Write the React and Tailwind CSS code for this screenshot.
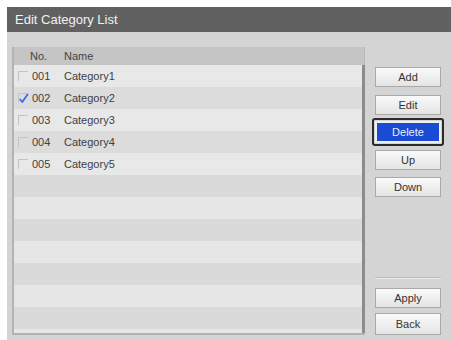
const rows = [
  { no: '001', name: 'Category1', checked: false },
  { no: '002', name: 'Category2', checked: true },
  { no: '003', name: 'Category3', checked: false },
  { no: '004', name: 'Category4', checked: false },
  { no: '005', name: 'Category5', checked: false },
]

const btn =
  'flex h-[20px] w-[66px] items-center justify-center border border-[#a9a9a9] bg-gradient-to-b from-[#fafafa] to-[#e4e4e4] text-[11px] text-[#333]'

function Btn({ children, className = '' }) {
  return <div className={`${btn} ${className}`}>{children}</div>
}

export default function App() {
  const filler = Array.from({ length: 8 })
  return (
    <div
      className="h-[340px] w-[451px] overflow-hidden bg-white pl-[7px] pt-[7px]"
      style={{ fontFamily: '"Liberation Sans", Arial, sans-serif' }}
    >
      <div className="flex h-[333px] flex-col">
        <div className="flex h-[25px] items-center bg-[#616161] pl-[8px] text-[13px] text-[#f2f2f2]">
          Edit Category List
        </div>
        <div className="flex flex-1 gap-[10px] bg-[#d4d4d4] pl-[5px] pt-[15px]">
          {/* list */}
          <div className="flex h-[288px] w-[353px] flex-col overflow-hidden border-l-[2px] border-b-[2px] border-[#b3b3b3]">
            <div className="flex h-[18px] shrink-0 items-center bg-[#c5c5c5] text-[11px] text-[#444] border-r border-[#b8b8b8]">
              <span className="ml-[16px] w-[34px]">No.</span>
              <span>Name</span>
            </div>
            <div className="flex-1 overflow-hidden border-r-[3px] border-[#8c8c8c]">
              {rows.map((r, i) => (
                <div
                  key={r.no}
                  className={`flex h-[22px] items-center text-[11px] text-[#3f3f3f] ${
                    i % 2 === 0 ? 'bg-[#e8e8e8]' : 'bg-[#dcdcdc]'
                  }`}
                >
                  <span className="relative ml-[4px] h-[10px] w-[10px] border-l border-t border-[#c4c4c4]">
                    {r.checked && (
                      <svg viewBox="0 0 10 10" className="absolute -left-[1px] -top-[1px] h-[11px] w-[11px]">
                        <path d="M1.5 5.5 L4 8 L9 1" fill="none" stroke="#3b6fe0" strokeWidth="1.6" />
                      </svg>
                    )}
                  </span>
                  <span className="ml-[4px] w-[32px]">{r.no}</span>
                  <span>{r.name}</span>
                </div>
              ))}
              {filler.map((_, i) => (
                <div
                  key={i}
                  className={`h-[22px] ${(i + 5) % 2 === 0 ? 'bg-[#e6e6e6]' : 'bg-[#dadada]'}`}
                />
              ))}
            </div>
          </div>
          {/* buttons */}
          <div className="flex w-[66px] flex-col pt-[20px]">
            <Btn>Add</Btn>
            <Btn className="mt-[8px]">Edit</Btn>
            <div className="relative mt-[6px] h-[22px]">
              <div className="absolute -inset-x-[3px] -inset-y-[3px] rounded-[3px] border-[2px] border-[#2b2b2b]" />
              <div className="absolute inset-0 flex items-center justify-center border-[2px] border-[#f0f0f0] bg-[#1a4bd4] text-[11px] text-[#e8eeff]">
                Delete
              </div>
            </div>
            <Btn className="mt-[7px]">Up</Btn>
            <Btn className="mt-[7px]">Down</Btn>
            <div className="mt-[80px] h-[2px] border-t border-b border-t-[#b9b9b9] border-b-[#ececec]" />
            <Btn className="mt-[9px]">Apply</Btn>
            <Btn className="mt-[5px] h-[22px]">Back</Btn>
          </div>
        </div>
      </div>
    </div>
  )
}
